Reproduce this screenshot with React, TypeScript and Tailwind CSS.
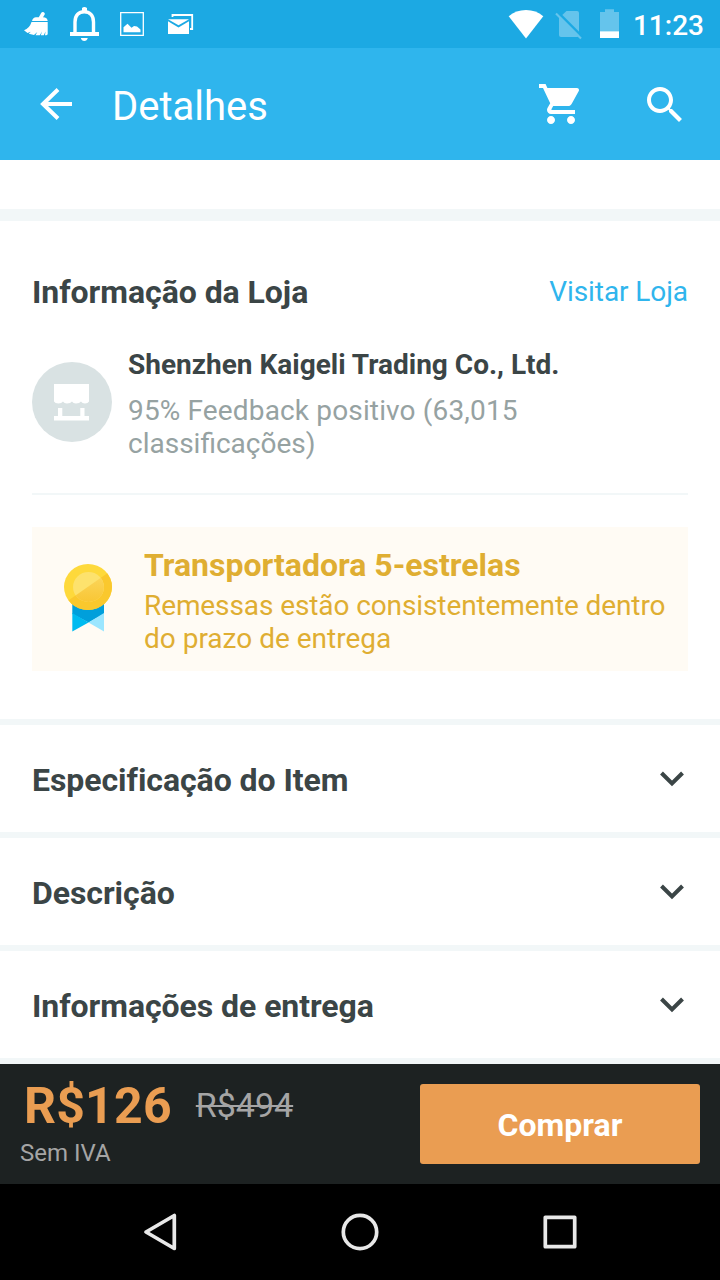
import { ReactNode } from "react";

type TRow = {
  id: number;
  title: string;
};

const rows: TRow[] = [
  { id: 1, title: "Especificação do Item" },
  { id: 2, title: "Descrição" },
  { id: 3, title: "Informações de entrega" },
];

function StatusBar() {
  return (
    <div className="flex h-12 items-center justify-between bg-[#1ca9e3] text-white">
      <div className="flex h-12 items-center pl-5">
        <svg className="mr-2.5 h-12 w-9" viewBox="20 0 36 48" fill="currentColor">
          <path d="M38.800 17.300 41 13.200Q42 11.500 43.800 12.200Q45.300 13 44.700 14.500L43 17.300Q47.500 17.500 47.700 21H32Q33 17.300 36 17.300Z" />
          <path d="M31.500 22H47.700V34Q47.400 35.200 46 35.200H45L45.500 31.500L43.800 35.200H40.800L42 31.500L39.800 35.200H35.500L37.300 32L34 35L28.800 33.800L30.800 31.800L27.500 33L24 30.300Q29.500 28.500 31.500 22Z" />
        </svg>
        <svg className="h-12 w-9" viewBox="66 0 36 48">
          <path
            d="M75 32.500V22C75 15 79 11.700 84.200 11.700S93.500 15 93.500 22V32.500"
            fill="none"
            stroke="currentColor"
            strokeWidth="3.400"
          />
          <path d="M70 32H99V36H70ZM82 8Q84.300 5.800 87 8V12H82ZM80.800 38H87.800Q87 41 84.300 41T80.800 38Z" fill="currentColor" />
        </svg>
        <svg className="ml-4 h-12 w-7" viewBox="118 0 28 48">
          <path d="M120.700 12.700H143.300V35.300H120.700Z" fill="none" stroke="currentColor" strokeWidth="1.300" />
          <path d="M123.500 32.300V27.300L127.500 23.700L131.500 27.700L134 26L137 26.500L140.500 29.500V32.300Z" fill="currentColor" />
        </svg>
        <svg className="ml-5 h-12 w-8" viewBox="166 0 32 48">
          <path d="M172.500 17V15H192.200V29H190" fill="none" stroke="currentColor" strokeWidth="1.800" />
          <path d="M168 19.200H189L178.500 25.300ZM168 21.300L178.500 27.500L189 21.300V34H168Z" fill="currentColor" />
        </svg>
      </div>
      <div className="flex h-12 items-center pr-4">
        <svg className="h-12 w-10" viewBox="506 0 40 48">
          <path d="M526 38.500 508.700 16.200Q516 10 526 10T543.300 16.200Z" fill="currentColor" />
        </svg>
        <svg className="ml-2 h-12 w-8" viewBox="554 0 32 48">
          <path d="M566.500 11H577Q579 11 579 13V35Q579 37 577 37H561Q559 37 559 35V18Z" fill="#65c4ec" />
          <path d="M557.500 12 582.500 37" stroke="#1ca9e3" strokeWidth="2.500" />
          <path d="M556 13.500 581 38.500" stroke="#65c4ec" strokeWidth="2.200" />
        </svg>
        <svg className="ml-3 h-12 w-6" viewBox="598 0 24 48">
          <path d="M600 31.500V12H605V9.200H614V12H619V31.500Z" fill="#65c4ec" />
          <path d="M600 31.300H619V38H600Z" fill="currentColor" />
        </svg>
        <span className="ml-[11px] mt-[3px] text-[28px] font-medium leading-none">11:23</span>
      </div>
    </div>
  );
}

function Header() {
  return (
    <header className="flex h-28 items-center bg-[#2fb5ed] pl-8 pr-[31px] text-white">
      <svg className="size-12" viewBox="0 0 48 48" fill="none" stroke="currentColor" strokeWidth="4">
        <path d="M26 9.500 11 24 26 38.500M10.500 24H40" />
      </svg>
      <h1 className="ml-8 mt-1.5 flex-1 text-[40px] leading-none">Detalhes</h1>
      <svg className="size-12" viewBox="0 0 24 24" fill="currentColor">
        <path d="M7 18c-1.100 0-1.990.900-1.990 2S5.900 22 7 22s2-.900 2-2-.900-2-2-2zM1 2v2h2l3.600 7.590-1.350 2.450c-.160.280-.250.610-.250.960 0 1.100.900 2 2 2h12v-2H7.420c-.140 0-.250-.110-.250-.250l.030-.120.900-1.630h7.450c.750 0 1.410-.410 1.750-1.030l3.580-6.490c.080-.140.120-.310.120-.480 0-.550-.450-1-1-1H5.210l-.940-2H1zm16 16c-1.100 0-1.990.900-1.990 2s.890 2 1.990 2 2-.900 2-2-.900-2-2-2z" />
      </svg>
      <svg className="ml-14 mt-px size-12" viewBox="0 0 24 24" fill="currentColor">
        <path d="M15.500 14h-.790l-.280-.270C15.410 12.590 16 11.110 16 9.500 16 5.910 13.090 3 9.500 3S3 5.910 3 9.500 5.910 16 9.500 16c1.610 0 3.090-.590 4.230-1.570l.270.280v.790l5 4.990L20.490 19l-4.990-5zm-6 0C7.010 14 5 11.990 5 9.500S7.010 5 9.500 5 14 7.010 14 9.500 11.990 14 9.500 14z" />
      </svg>
    </header>
  );
}

function StoreIcon() {
  return (
    <svg className="size-20 shrink-0" viewBox="0 0 80 80">
      <circle cx="40" cy="40" r="40" fill="#d9e2e3" />
      <path
        d="M22 22H57V39.500Q56 41.500 53 41.500Q50 41.500 49 39.500Q47.500 41.500 44 41.500Q41 41.500 40 39.500Q38.500 41.500 35 41.500Q32 41.500 31 39.500Q29.500 41.500 26.500 41.500Q23 41.500 22 39.500Z"
        fill="#fff"
      />
      <path d="M22 54H26V46H30.300V54H48.300V46H52.500V54H57V58.500H22Z" fill="#fff" />
    </svg>
  );
}

function MedalIcon() {
  return (
    <svg className="h-[68px] w-12 shrink-0" viewBox="0 0 48 68">
      <defs>
        <clipPath id="disc">
          <ellipse cx="24" cy="23" rx="24" ry="23" />
        </clipPath>
        <clipPath id="inner">
          <ellipse cx="24.500" cy="23" rx="15.500" ry="15" />
        </clipPath>
        <linearGradient id="shade" x1="0" y1="0" x2="0" y2="1">
          <stop offset="0" stopColor="#fbd75f" />
          <stop offset="1" stopColor="#f9c531" />
        </linearGradient>
      </defs>
      <path d="M8.300 38H40V50L24.500 58.500L8.300 50Z" fill="#009fdb" />
      <path d="M8.300 49 24.500 58.500 8.300 67.500Z" fill="#00bbf0" />
      <path d="M40 49 24.500 58.500 40 67.500Z" fill="#9be6ff" />
      <g clipPath="url(#disc)">
        <path d="M0 0H48V46H0Z" fill="#fed93b" />
        <path d="M48 6V46H0V39L5 36Z" fill="#fac82d" />
      </g>
      <g clipPath="url(#inner)">
        <path d="M8 7H41V39H8Z" fill="#fde26d" />
        <path d="M43 9.500V40H8V34Z" fill="url(#shade)" />
      </g>
    </svg>
  );
}

function StoreInfo() {
  return (
    <section className="h-[498px] px-8 pt-[52px]">
      <div className="flex h-[38px] items-center justify-between">
        <h2 className="text-[32px] font-bold tracking-[-0.05px]">Informação da Loja</h2>
        <a className="text-[28px] tracking-[-0.08px] text-[#2fb5ed]">Visitar Loja</a>
      </div>
      <div className="mt-[37px] flex h-[145px]">
        <div className="pt-[14px]">
          <StoreIcon />
        </div>
        <div className="ml-4">
          <h3 className="text-[28px] font-bold leading-[33px]">Shenzhen Kaigeli Trading Co., Ltd.</h3>
          <p className="mt-[13px] text-[28px] leading-[33px] text-[#96a2a2]">
            <span className="tracking-[0.15px]">95% Feedback positivo (63,015</span>
            <br />
            classificações)
          </p>
        </div>
      </div>
      <div className="h-0.5 bg-[#f2f7f8]" />
      <div className="mt-8 flex h-36 bg-[#fffbf4] pl-8 pt-[19px] text-[#dfae32]">
        <div className="pt-[17.500px]">
          <MedalIcon />
        </div>
        <div className="ml-8">
          <h3 className="text-[32px] font-bold leading-[38px]">Transportadora 5-estrelas</h3>
          <p className="mt-[5px] text-[28px] leading-[33px]">
            <span className="tracking-[-0.1px]">Remessas estão consistentemente dentro</span>
            <br />
            do prazo de entrega
          </p>
        </div>
      </div>
    </section>
  );
}

function ExpandRow({ title }: { title: string }) {
  return (
    <div className="flex h-[113px] items-center justify-between border-t-[6px] border-[#f2f7f8] px-8">
      <h2 className="mt-[3px] text-[32px] font-bold tracking-[-0.06px]">{title}</h2>
      <svg className="size-8" viewBox="0 0 32 32" fill="none" stroke="currentColor" strokeWidth="4">
        <path d="M5.500 10 16 20.500 26.500 10" />
      </svg>
    </div>
  );
}

function BuyBar() {
  return (
    <div className="flex h-[120px] items-start bg-[#1d2222] px-5 pt-5">
      <div className="flex-1 text-[#a5a5a5]">
        <div className="-mt-2 flex h-[60px] items-center">
          <span className="ml-1 text-[50px] font-bold leading-none tracking-[0.2px] text-[#ea9d52]">R$126</span>
          <span className="-mt-0.5 ml-6 text-[34px] leading-none line-through decoration-2">R$494</span>
        </div>
        <div className="mt-[3px] text-2xl leading-7">Sem IVA</div>
      </div>
      <button className="h-20 w-[280px] rounded-[3px] bg-[#ea9d52] pt-0.5 text-[32px] font-bold text-white">
        Comprar
      </button>
    </div>
  );
}

function NavSlot({ children }: { children: ReactNode }) {
  return (
    <svg className="size-12" viewBox="0 0 48 48" fill="none" stroke="#e8e8e8" strokeWidth="3.700" strokeLinejoin="round">
      {children}
    </svg>
  );
}

export default function App() {
  return (
    <main className="flex h-[1280px] w-[720px] flex-col overflow-hidden bg-white font-['Roboto',sans-serif] text-[#3b4546]">
      <StatusBar />
      <Header />
      <div className="h-[61px] border-b-[12px] border-[#f2f7f8]" />
      <StoreInfo />
      {rows.map((row) => (
        <ExpandRow key={row.id} title={row.title} />
      ))}
      <div className="h-1.5 bg-[#f2f7f8]" />
      <BuyBar />
      <nav className="flex h-24 items-center justify-between bg-black px-34">
        <NavSlot>
          <path d="M10 24 38.300 7.500V40.500Z" />
        </NavSlot>
        <NavSlot>
          <circle cx="24" cy="24" r="16.700" />
        </NavSlot>
        <NavSlot>
          <path d="M9.300 9.300H38.700V38.700H9.300Z" />
        </NavSlot>
      </nav>
    </main>
  );
}
